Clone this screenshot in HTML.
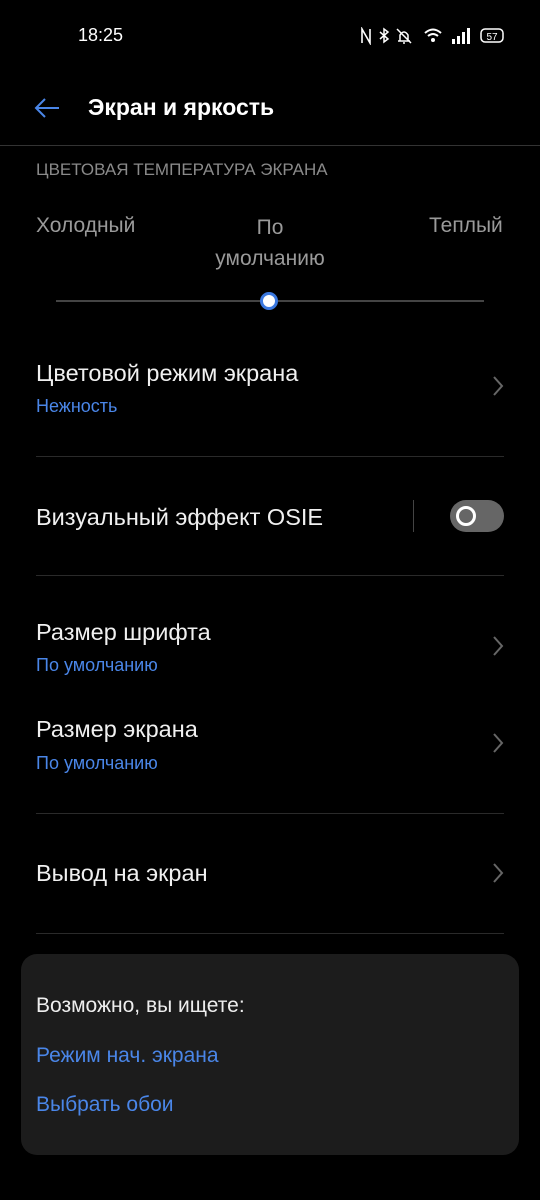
<!DOCTYPE html>
<html><head><meta charset="utf-8"><style>
body{margin:0;width:540px;height:1200px;background:#000;font-family:"Liberation Sans",sans-serif;position:relative;overflow:hidden;color:#fff}
.a{position:absolute;white-space:nowrap}
.t{font-size:23.5px;color:#f0f0f0}
.s{font-size:18px;color:#4a86e8}
.g{font-size:21px;color:#9a9a9a}
.hr{position:absolute;left:36px;width:468px;height:1px;background:#2a2a2a}
.ch{position:absolute;left:492px}
</style></head><body>
<div class="a" style="left:78px;top:25px;font-size:18px">18:25</div>
<svg class="a" style="left:360px;top:27px" width="60" height="18">
<path d="M2 16V2L10 16V2" stroke="#fff" stroke-width="1.6" fill="none"/>
<path d="M20 5L28 12L24 15V2L28 5L20 12" stroke="#fff" stroke-width="1.5" fill="none"/>
<path d="M38 14H50M40 14V8Q44 2 48 8V14M43 16H45M37 2L51 16" stroke="#fff" stroke-width="1.5" fill="none"/>
</svg>
<svg class="a" style="left:424px;top:27px" width="80" height="18">
<path d="M1 6 Q9 -1 17 6 M4 9 Q9 5 14 9" stroke="#fff" stroke-width="2" fill="none"/><circle cx="9" cy="13" r="2" fill="#fff"/>
<rect x="28" y="12" width="3" height="5" fill="#fff"/><rect x="33" y="9" width="3" height="8" fill="#fff"/><rect x="38" y="5" width="3" height="12" fill="#fff"/><rect x="43" y="1" width="3" height="16" fill="#fff"/>
<rect x="57" y="2" width="22" height="13" rx="4" stroke="#fff" stroke-width="1.5" fill="none"/>
<text x="68" y="13" font-size="10" fill="#fff" text-anchor="middle" font-family="Liberation Sans">57</text></svg>
<svg class="a" style="left:33px;top:97px" width="28" height="22"><path d="M26 11H3M12 2L3 11L12 20" stroke="#4a86e8" stroke-width="2" fill="none"/></svg>
<div class="a" style="left:88px;top:94px;font-size:23px;font-weight:bold">Экран и яркость</div>
<div class="a" style="left:0;top:145px;width:540px;height:1px;background:#333"></div>
<div class="a" style="left:36px;top:160px;font-size:17px;color:#8a8a8a">ЦВЕТОВАЯ ТЕМПЕРАТУРА ЭКРАНА</div>
<div class="a g" style="left:36px;top:214px">Холодный</div>
<div class="a g" style="left:170px;top:212px;width:200px;text-align:center;white-space:normal;line-height:31px">По<br>умолчанию</div>
<div class="a g" style="left:429px;top:214px">Теплый</div>
<div class="a" style="left:56px;top:300px;width:428px;height:2px;background:#444"></div>
<div class="a" style="left:260px;top:292px;width:12px;height:12px;border-radius:50%;background:#fff;border:3px solid #3a78e0"></div>
<div class="a t" style="left:36px;top:360px">Цветовой режим экрана</div>
<div class="a s" style="left:36px;top:396px">Нежность</div>
<svg class="ch" style="top:375px" width="12" height="22"><path d="M2 2L10 11L2 20" stroke="#666" stroke-width="2" fill="none"/></svg>
<div class="hr" style="top:456px"></div>
<div class="a t" style="left:36px;top:504px">Визуальный эффект OSIE</div>
<div class="a" style="left:413px;top:500px;width:1px;height:32px;background:#444"></div>
<div class="a" style="left:450px;top:500px;width:54px;height:32px;border-radius:16px;background:#666"></div>
<div class="a" style="left:456px;top:506px;width:14px;height:14px;border-radius:50%;border:3px solid #fff"></div>
<div class="hr" style="top:575px"></div>
<div class="a t" style="left:36px;top:619px">Размер шрифта</div>
<div class="a s" style="left:36px;top:655px">По умолчанию</div>
<svg class="ch" style="top:635px" width="12" height="22"><path d="M2 2L10 11L2 20" stroke="#666" stroke-width="2" fill="none"/></svg>
<div class="a t" style="left:36px;top:716px">Размер экрана</div>
<div class="a s" style="left:36px;top:753px">По умолчанию</div>
<svg class="ch" style="top:732px" width="12" height="22"><path d="M2 2L10 11L2 20" stroke="#666" stroke-width="2" fill="none"/></svg>
<div class="hr" style="top:813px"></div>
<div class="a t" style="left:36px;top:860px">Вывод на экран</div>
<svg class="ch" style="top:862px" width="12" height="22"><path d="M2 2L10 11L2 20" stroke="#666" stroke-width="2" fill="none"/></svg>
<div class="hr" style="top:933px"></div>
<div class="a" style="left:21px;top:954px;width:498px;height:201px;border-radius:16px;background:#1c1c1c"></div>
<div class="a" style="left:36px;top:994px;font-size:21px;color:#eee">Возможно, вы ищете:</div>
<div class="a" style="left:36px;top:1044px;font-size:21px;color:#4a86e8">Режим нач. экрана</div>
<div class="a" style="left:36px;top:1093px;font-size:21px;color:#4a86e8">Выбрать обои</div>
</body></html>
